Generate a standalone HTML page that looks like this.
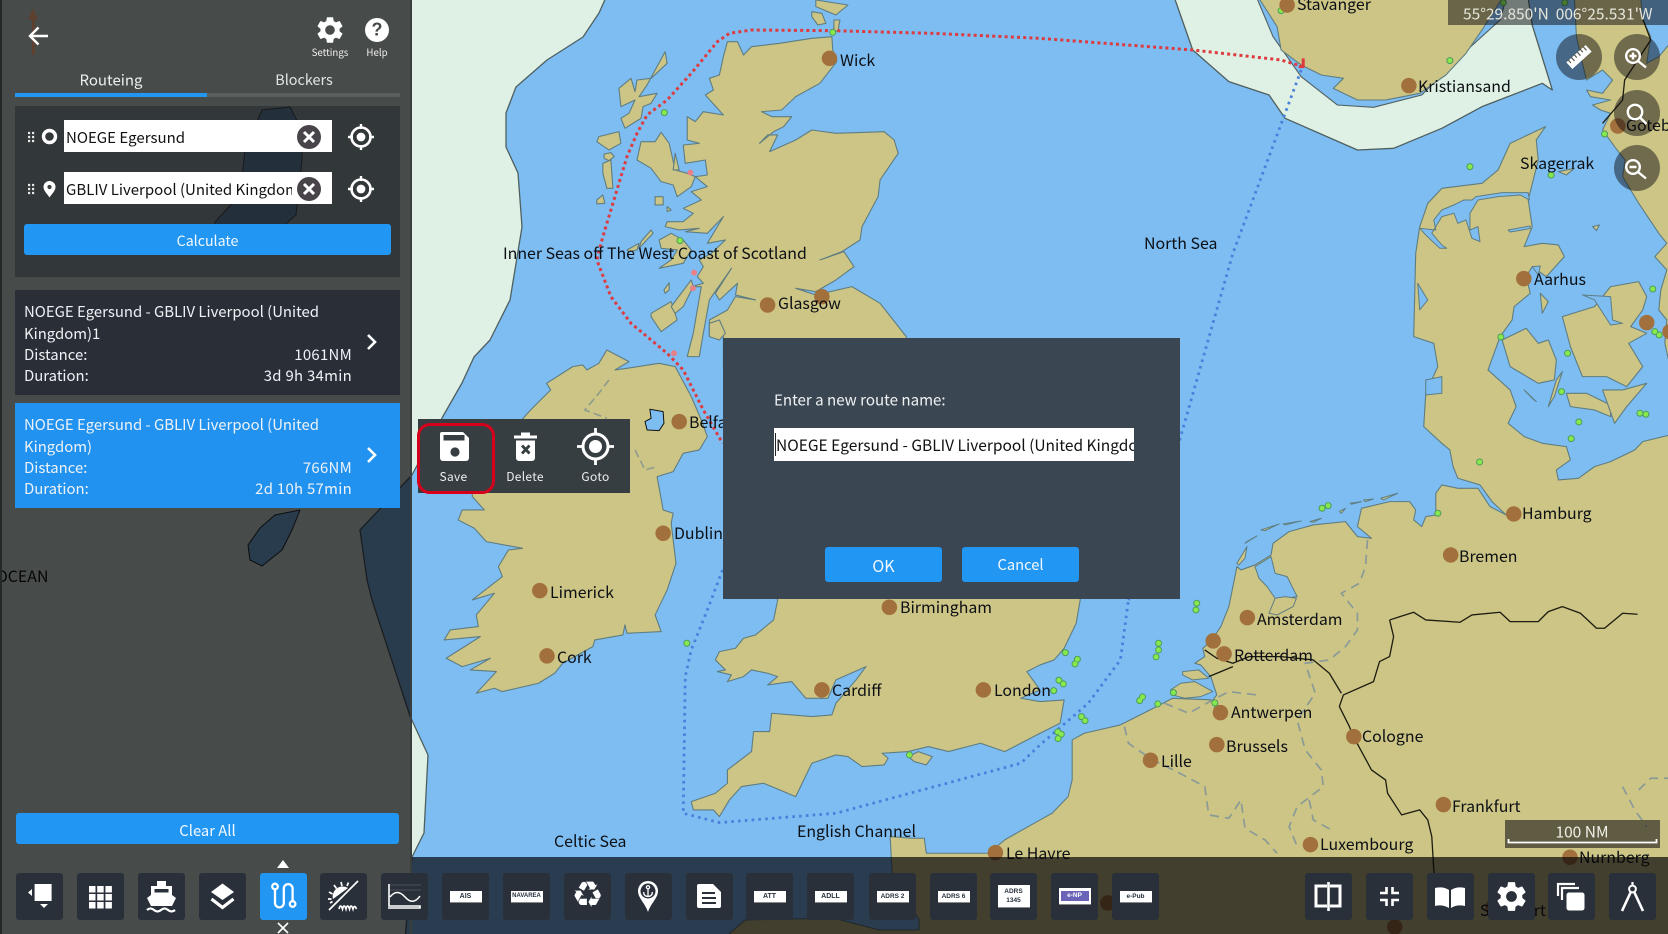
<!DOCTYPE html>
<html><head><meta charset="utf-8"><title>Routeing</title>
<style>
html,body{margin:0;padding:0;width:1668px;height:934px;overflow:hidden;background:#7dbdf2}
body{position:relative;font-family:"Noto Sans CJK JP","Liberation Sans",sans-serif;font-size:15px}
.abs,.l,.t,.btn,.tb{position:absolute}
#map{position:absolute;left:0;top:0}
#map *{vector-effect:non-scaling-stroke;stroke-linejoin:round}
.l{color:#0c0f14;font-size:15.9px;line-height:1;white-space:nowrap;margin-top:1px;transform:translateY(calc(-50% - 1px))}
.t{white-space:nowrap;line-height:1;transform:translateY(-50%)}
.c{transform:translate(-50%,-50%)}
.btn{background:#2196f3;color:#f2f8ff;border-radius:3px;text-align:center;font-size:15px}
.tb{top:873px;width:47px;height:47px;background:#2a303a;border-radius:3px}
.tb svg{position:absolute;left:0;top:0}
.tag{position:absolute;left:7.5px;top:18px;width:32px;height:11px;background:#fff;color:#27303c;font:bold 7px/11px "Liberation Sans",sans-serif;text-align:center;box-shadow:0 1px 0 #888}
.rd{position:absolute;width:46px;height:46px;border-radius:50%;background:rgba(8,6,12,.47)}
.inp{position:absolute;left:64px;width:268px;height:32px;background:#fff;color:#111;line-height:35px;font-size:15px;overflow:hidden}
.inp span{position:absolute;left:2px;top:0;width:226px;overflow:hidden;white-space:nowrap}
.card{position:absolute;left:15px;width:385px;height:105px;color:#eef2f5}
.card div{position:absolute;white-space:nowrap;line-height:21px;font-size:14.9px}
</style></head><body>

<svg id="map" width="1668" height="934" viewBox="0 0 1668 934">
<defs>
<symbol id="gear" viewBox="0 0 24 24"><path fill="#fff" d="M19.14 12.94c.04-.3.06-.61.06-.94 0-.32-.02-.64-.07-.94l2.03-1.58c.18-.14.23-.41.12-.61l-1.92-3.32c-.12-.22-.37-.29-.59-.22l-2.39.96c-.5-.38-1.03-.7-1.62-.94l-.36-2.54c-.04-.24-.24-.41-.48-.41h-3.84c-.24 0-.43.17-.47.41l-.36 2.54c-.59.24-1.13.57-1.62.94l-2.39-.96c-.22-.08-.47 0-.59.22L2.74 8.87c-.12.21-.08.47.12.61l2.03 1.58c-.05.3-.09.63-.09.94s.02.64.07.94l-2.03 1.58c-.18.14-.23.41-.12.61l1.92 3.32c.12.22.37.29.59.22l2.39-.96c.5.38 1.03.7 1.62.94l.36 2.54c.05.24.24.41.48.41h3.84c.24 0 .44-.17.47-.41l.36-2.54c.59-.24 1.13-.56 1.62-.94l2.39.96c.22.08.47 0 .59-.22l1.92-3.32c.12-.22.07-.47-.12-.61l-2.01-1.58zM12 15.6c-1.98 0-3.6-1.62-3.6-3.6s1.62-3.6 3.6-3.6 3.6 1.62 3.6 3.6-1.62 3.6-3.6 3.6z"/></symbol>
</defs>
<rect width="1668" height="934" fill="#7dbdf2"/>
<!-- territorial light zone west -->
<polygon fill="#dff1e4" stroke="#4f5f60" stroke-width="1.3" points="-5,-5 607,-5 599,13 583,37 547,60 516,87 506,113 506,147 518,173 522,227 510,300 490,340 474,357 462,383 442,418 412,475 360,530 367,580 372,600 410,716 428,755 424,833 412,857 405,940 -5,940"/>
<!-- lakes under panel -->
<polygon fill="#7dbdf2" stroke="#333" stroke-width="1" points="262,110 290,107 302,130 302,160 296,215 275,233 215,232 215,222 240,195 245,150"/>
<polygon fill="#7dbdf2" stroke="#222" stroke-width="1" points="300,510 292,530 282,550 262,566 250,560 248,545 260,528 275,515"/>
<g transform="translate(410,0) scale(.4018,.3333)">
 <g fill="#cdc585" stroke="#5f7d80" stroke-width="1.1">
  <!-- Scotland -->
  <polygon points="780,1100 780,1010 745,1010 745,960 790,930 810,890 860,900 810,885 815,850 770,900 760,880 800,805 745,900 730,1000 720,1070 690,1070 705,1000 725,860 700,860 730,850 715,830 730,800 720,780 750,760 785,720 740,730 780,650 740,700 685,695 720,685 670,690 635,680 640,665 680,665 705,640 680,625 725,600 700,575 740,560 710,530 740,525 735,480 685,490 680,435 720,430 690,420 690,350 710,365 730,335 780,345 735,285 755,270 745,235 770,225 780,170 790,125 815,125 830,165 850,140 920,130 1000,115 1050,110 1052,150 1062,185 1020,250 960,290 925,330 875,335 900,350 950,350 930,380 905,395 870,430 890,405 915,405 895,455 960,420 1000,390 1060,400 1180,395 1205,420 1215,460 1170,540 1165,590 1125,680 1120,720 1075,755 1020,780 1080,755 1105,800 1060,840 1010,875 960,865 1010,885 1100,860 1170,910 1235,1010 1235,1100"/>
  <!-- Ireland -->
  <polygon points="280,1257 300,1230 350,1170 340,1150 405,1100 430,1095 440,1110 470,1090 490,1050 545,1085 510,1110 540,1105 620,1090 660,1100 700,1190 725,1260 740,1310 720,1350 680,1360 655,1415 615,1430 630,1530 655,1540 650,1570 662,1690 640,1770 610,1845 625,1895 540,1900 535,1875 530,1905 460,1920 455,1940 380,1990 360,2020 320,2050 230,2075 210,2065 165,2080 215,2015 150,2010 200,1975 130,2000 90,1975 175,1910 85,1920 100,1890 170,1880 165,1845 210,1780 155,1800 230,1730 220,1700 245,1650 280,1645 190,1625 160,1585 120,1560 130,1530 185,1530 155,1490 155,1470"/>
  <!-- Hebrides -->
  <polygon points="635,155 640,190 600,235 565,240 560,275 550,235 520,265 525,320 560,300 545,340 525,355 535,385 575,355 580,320 600,310 615,280 570,290 590,255"/>
  <polygon points="470,410 520,395 525,430 495,450 465,425"/>
  <polygon points="483,462 500,458 508,470 495,482 483,475"/>
  <polygon points="480,490 500,480 505,565 490,565 480,520"/>
  <polygon points="465,600 480,585 485,610 465,612"/>
  <polygon points="625,397 645,430 660,510 690,520 710,530 700,560 665,590 655,555 625,545 600,505 565,480 575,425 610,425"/>
  <polygon points="660,460 670,510 655,510"/>
  <polygon points="610,590 630,590 630,615 610,615"/>
  <polygon points="640,620 650,630 640,635"/>
  <polygon points="575,725 600,690 605,700 570,745"/>
  <polygon points="540,750 570,730 565,750 545,755"/>
  <polygon points="620,720 650,700 680,720 700,750 680,790 620,805 650,780 665,750 625,745"/>
  <polygon points="600,940 650,905 665,960 625,995 600,950"/>
  <polygon points="650,920 700,840 705,860 680,920 660,940"/>
  <polygon points="745,970 770,960 785,1000 770,1020 745,1010"/>
  <polygon points="632,870 645,848 645,870 635,880"/>
  <polygon points="1010,0 1090,15 1060,45 1010,20"/>
  <polygon points="1000,35 1025,40 1035,70 1015,75 1000,50"/>
  <polygon points="1055,60 1070,60 1065,95 1055,90"/>
 </g>
 <polygon fill="#7dbdf2" stroke="#111" stroke-width="1" points="597,1228 630,1235 632,1270 620,1292 590,1290 585,1265 600,1255"/>
 <path fill="none" stroke="#8c9a8c" stroke-width="1.6" stroke-dasharray="8 4" d="M495,1140 L470,1180 L435,1230 L490,1255"/>

 <g transform="translate(0,1350)">
  <!-- England and Wales -->
  <polygon fill="#cdc585" stroke="#5f7d80" stroke-width="1.1" points="900,400 915,450 905,510 860,555 830,565 810,595 770,605 760,630 785,660 765,665 800,675 790,695 830,680 850,660 890,670 915,680 890,705 950,695 985,745 1040,745 1060,690 1135,650 1110,690 1060,760 1050,795 1000,800 900,790 895,845 855,845 850,905 790,960 790,1000 760,1030 700,1055 705,1080 755,1080 770,1100 795,1050 825,1010 880,1000 960,1040 1000,940 1060,915 1090,920 1125,950 1180,945 1190,925 1175,910 1240,905 1290,890 1340,905 1420,880 1480,905 1568,850 1618,820 1628,750 1568,755 1520,745 1568,720 1535,665 1568,645 1603,630 1628,595 1658,520 1668,450 1668,400"/>
  <polygon fill="#cdc585" stroke="#5f7d80" stroke-width="1.1" points="1240,920 1265,905 1300,920 1285,945 1255,935"/>
  <path fill="none" stroke="#8c9a8c" stroke-width="1.6" stroke-dasharray="8 4" d="M560,0 L585,60 L615,50"/>
 </g>

 <!-- Norway etc: zoom7 system -->
 <g transform="translate(1568,0)">
  <polygon fill="#dff1e4" stroke="#4f5f60" stroke-width="1.3" points="335,-5 380,150 470,245 570,285 610,355 790,450 880,445 1000,385 1100,320 1250,250 1275,270 1225,75 1215,-5"/>
  <polygon fill="#7dbdf2" stroke="#4f5f60" stroke-width="1.1" points="540,-5 580,110 650,230 740,315 830,322 950,285 1040,175 1145,60 1160,-5"/>
  <g fill="#cdc585" stroke="#5f7d80" stroke-width="1.1">
   <polygon points="545,-5 590,80 600,150 650,195 700,225 755,235 730,265 790,300 860,300 945,280 1010,225 1060,160 1100,90 1150,-5"/>
   <!-- Sweden -->
   <polygon points="1330,-5 1495,-5 1500,60 1520,110 1510,190 1540,170 1568,130 1640,130 1640,1110 1568,1100 1555,1030 1560,960 1540,930 1545,870 1560,810 1530,770 1560,730 1540,700 1490,610 1450,530 1456,480 1430,440 1400,390 1420,340 1395,330 1375,315 1420,300 1370,290 1360,270 1400,280 1425,240 1400,210 1360,240 1350,190 1335,110"/>
   <!-- Continent -->
   <polygon points="1258,380 1235,420 1240,480 1215,600 1225,680 1205,740 1250,730 1290,735 1305,770 1260,830 1225,800 1210,830 1220,880 1180,920 1175,960 1145,1010 1130,1060 1115,1110 1170,1170 1185,1220 1165,1270 1205,1310 1250,1330 1310,1340 1320,1380 1285,1410 1290,1440 1340,1435 1380,1400 1420,1385 1480,1350 1500,1325 1568,1305 1700,1300 1700,2830 -800,2830 -734,2760 -513,2755 -400,2790 -301,2790 -301,2760 -368,2620 -373,2510 -318,2515 -288,2515 -283,2560 -128,2560 -88,2520 0,2460 30,2440 70,2390 80,2340 80,2220 110,2200 200,2175 290,2120 330,2095 430,2100 440,2085 425,2030 400,1995 385,1990 410,1970 405,1945 425,1925 450,1880 470,1820 490,1700 500,1710 535,1695 575,1665 580,1630 620,1595 680,1575 760,1565 790,1610 825,1615 790,1580 800,1525 870,1505 920,1505 935,1530 930,1560 950,1580 960,1550 985,1545 985,1480 1000,1455 1040,1465 1090,1465 1120,1520 1160,1545 1125,1505 1095,1455 1040,1435 1028,1400 1020,1350 1000,1330 955,1280 960,1180 990,1100 980,1030 930,1010 935,760 945,680 965,610 1000,565 1100,550 1140,510 1170,430"/>
   <!-- Danish islands -->
   <polygon points="1150,1020 1210,985 1240,1030 1265,1020 1285,1080 1280,1140 1240,1150 1170,1100"/>
   <polygon points="1300,950 1380,920 1420,860 1490,845 1510,890 1500,930 1470,980 1510,1000 1465,1030 1500,1100 1460,1160 1410,1130 1350,1130 1320,1040"/>
   <polygon points="1310,1180 1360,1180 1420,1215 1420,1250 1380,1230 1320,1220"/>
   <polygon points="1400,1170 1450,1170 1510,1150 1460,1220 1430,1270"/>
   <polygon points="1300,1115 1280,1190 1265,1220 1285,1140"/>
   <polygon points="1205,1170 1235,1205 1225,1195"/>
   <polygon points="1245,880 1265,905 1250,940"/>
   <polygon points="1290,515 1330,505 1310,525"/>
   <polygon points="1375,680 1392,675 1385,692"/>
  </g>
  <g fill="#7dbdf2" stroke="#5f7d80" stroke-width="1">
   <polygon points="1075,600 1085,590 1150,578 1215,578 1218,600 1195,585 1140,590 1090,600 1070,640 1070,690 1090,680 1095,725 1075,715 1060,660 1040,670 1030,640 1000,650 985,680 975,700 1000,735 1012,745 995,745 960,705 945,685 985,690 980,660 1000,630 1035,612 1055,600"/>
   <polygon points="940,850 965,900 945,930"/>
   <polygon points="1225,800 1245,798 1240,825"/>
   <polygon points="1165,690 1220,678 1220,686 1170,696"/>
   <polygon points="1350,885 1420,890 1425,960 1450,970 1420,975 1380,900"/>
   <polygon points="960,1140 1000,1130 1000,1180 960,1185"/>
  </g>
 </g>

 <!-- zoom9 details -->
 <g transform="translate(1568,1350)">
  <polygon fill="#7dbdf2" stroke="#5f7d80" stroke-width="1" points="535,350 575,320 585,370 615,380 640,440 610,445 585,445 565,410 545,385"/>
  <polygon fill="#cdc585" stroke="#5f7d80" stroke-width="1" points="585,445 610,440 638,445 630,470 590,495 570,490"/>
  <g fill="#cdc585" stroke="#5f7d80" stroke-width="1">
   <polygon points="490,340 515,290 510,325 495,345"/>
   <polygon points="510,280 540,258 515,275"/>
   <polygon points="550,240 595,222 560,242"/>
   <polygon points="605,222 650,213 610,225"/>
   <polygon points="672,215 700,205 680,217"/>
   <polygon points="745,185 760,175 750,190"/>
   <polygon points="772,160 800,155 775,163"/>
   <polygon points="805,150 830,147 810,155"/>
   <polygon points="848,145 890,130 855,150"/>
   <polygon points="325,720 350,700 385,695 430,725 400,740 360,745 330,735"/>
   <polygon points="355,665 395,660 420,685 380,690 355,675"/>
  </g>
  <path fill="none" stroke="#8a9a96" stroke-width="1.7" stroke-dasharray="9 6" d="M815,270 L810,350 L795,400 L750,430 L790,490 L790,540 L760,590 L720,630 L660,640 L685,730 L640,810 L660,900 L700,960 L705,1010 L640,1070 L620,1130 L640,1190 M210,830 L220,880 L280,930 L340,965 L410,1010 L420,1095 L470,1105 L500,1050 L510,1135 L560,1170 L590,1210 M310,760 L370,790 L430,750 L470,725 L540,735 M670,1050 L680,1110 L725,1140 M1450,1010 L1480,1080 L1510,1130 M1490,1020 L1520,985 L1568,985"/>
  <path fill="none" stroke="#1c1c10" stroke-width="1.3" d="M870,510 L930,487 L960,510 L1045,517 L1075,495 L1145,487 L1170,515 L1240,515 L1265,485 L1300,470 L1345,490 L1385,535 L1405,535 L1450,490 L1487,493 M870,510 L880,560 L870,620 L845,635 L830,695 L755,735 L745,770 L770,830 L780,860 L825,960 L860,990 L865,1030 L900,1095 L945,1080 L965,1110 L975,1160 L980,1260 L990,1340 M410,600 L440,625 L480,640 L520,620 L600,620 L680,630 L720,670 L750,730 M420,680 L480,650"/>
 </g>
 <path fill="none" stroke="#1c1c10" stroke-width="1.3" transform="translate(1568,0)" d="M1495,40 L1520,120 L1455,240 L1450,300 L1400,370"/>

 <!-- Routes -->
 <path fill="none" stroke="#dd3b3f" stroke-width="3" stroke-dasharray="3 3.2" d="M2223,200 L2168,180 L1948,150 L1568,115 L1300,100 L1050,92 L850,90 L795,100 L765,125 L700,220 L640,300 L590,345 L565,400 L540,470 L510,590 L480,710 L465,780 L500,890 L550,970 L640,1060 L680,1110 L730,1230 L778,1330"/>
 <path fill="none" stroke="#dd3b3f" stroke-width="3" d="M2223,175 V200 H2212"/>
 <path fill="none" stroke="#4a80dc" stroke-width="2.8" stroke-dasharray="2.6 4.2" d="M2218,210 L2178,340 L2048,760 L1918,1310 L1830,1720 L1788,1800 M778,1710 L740,1830 L700,1950 L685,2030 L680,2440 L770,2468 L1060,2440 L1520,2290 L1568,2235 L1688,2110 L1768,1980 L1788,1800"/>

 <!-- Green dots -->
 <path fill="none" stroke="#4f9a5c" stroke-width="7" stroke-linecap="round" d="M633 338h.01M1052 97h.01M672 722h.01M689 1930h.01M1243 2265h.01M2168 32h.01M2588 182h.01M2638 500h.01M2840 525h.01M2973 402h.01M3093 867h.01M3098 995h.01M3109 1005h.01M2715 1011h.01M2881 1060h.01M2866 1175h.01M3061 1240h.01M3076 1243h.01M2909 1266h.01M2890 1316h.01M2721 8h.01M2874 8h.01M2662 1386h.01M2558 1540h.01M2270 1525h.01M2285 1517h.01M1958 1810h.01M1956 1830h.01M1863 1930h.01M1863 1950h.01M1857 1971h.01M1631 1958h.01M1661 1978h.01M1655 1992h.01M1615 2041h.01M1626 2052h.01M1602 2072h.01M1823 2091h.01M1816 2102h.01M1900 2078h.01M1861 2112h.01M2003 2109h.01M2009 2125h.01M2016 2132h.01M1671 2150h.01M1680 2162h.01M1612 2196h.01M1621 2203h.01M1613 2216h.01"/>
 <path fill="none" stroke="#86ea4e" stroke-width="5" stroke-linecap="round" d="M633 338h.01M1052 97h.01M672 722h.01M689 1930h.01M1243 2265h.01M2168 32h.01M2588 182h.01M2638 500h.01M2840 525h.01M2973 402h.01M3093 867h.01M3098 995h.01M3109 1005h.01M2715 1011h.01M2881 1060h.01M2866 1175h.01M3061 1240h.01M3076 1243h.01M2909 1266h.01M2890 1316h.01M2721 8h.01M2874 8h.01M2662 1386h.01M2558 1540h.01M2270 1525h.01M2285 1517h.01M1958 1810h.01M1956 1830h.01M1863 1930h.01M1863 1950h.01M1857 1971h.01M1631 1958h.01M1661 1978h.01M1655 1992h.01M1615 2041h.01M1626 2052h.01M1602 2072h.01M1823 2091h.01M1816 2102h.01M1900 2078h.01M1861 2112h.01M2003 2109h.01M2009 2125h.01M2016 2132h.01M1671 2150h.01M1680 2162h.01M1612 2196h.01M1621 2203h.01M1613 2216h.01"/>
 <!-- Pink dots -->
 <path fill="none" stroke="#e8808a" stroke-width="6" stroke-linecap="round" d="M698 518h.01M707 818h.01M704 865h.01M657 1060h.01"/>
 <!-- City dots -->
 <path fill="none" stroke="#a2703c" stroke-width="15.5" stroke-linecap="round" d="M1044 175h.01M890 915h.01M1025 890h.01M670 1265h.01M630 1600h.01M323 1772h.01M341 1968h.01M1193 1822h.01M1025 2070h.01M1427 2070h.01M1457 2558h.01M2183 15h.01M2486 257h.01M3006 378h.01M2772 836h.01M3078 968h.01M3136 995h.01M2747 1542h.01M2590 1665h.01M2084 1853h.01M1999 1923h.01M2026 1962h.01M2017 2138h.01M2008 2234h.01M1843 2281h.01M2349 2210h.01M2572 2414h.01M2241 2534h.01M2887 2572h.01M2696 2721h.01M2451 2781h.01M1737 2709h.01"/>
</g>
</svg>

<!-- Map labels -->
<div class="l" style="left:840px;top:60px">Wick</div>
<div class="l" style="left:503px;top:253px">Inner Seas off The West Coast of Scotland</div>
<div class="l" style="left:778px;top:303px">Glasgow</div>
<div class="l" style="left:689px;top:422px">Belfast</div>
<div class="l" style="left:674px;top:533px">Dublin</div>
<div class="l" style="left:550px;top:592px">Limerick</div>
<div class="l" style="left:557px;top:657px">Cork</div>
<div class="l" style="left:900px;top:607px">Birmingham</div>
<div class="l" style="left:832px;top:690px">Cardiff</div>
<div class="l" style="left:994px;top:690px">London</div>
<div class="l" style="left:797px;top:831px">English Channel</div>
<div class="l" style="left:554px;top:841px">Celtic Sea</div>
<div class="l" style="left:1006px;top:853px">Le Havre</div>
<div class="l" style="left:1297px;top:4px">Stavanger</div>
<div class="l" style="left:1418px;top:86px">Kristiansand</div>
<div class="l" style="left:1520px;top:163px">Skagerrak</div>
<div class="l" style="left:1626px;top:125px">Goteborg</div>
<div class="l" style="left:1144px;top:243px">North Sea</div>
<div class="l" style="left:1534px;top:279px">Aarhus</div>
<div class="l" style="left:1522px;top:513px">Hamburg</div>
<div class="l" style="left:1459px;top:556px">Bremen</div>
<div class="l" style="left:1257px;top:619px">Amsterdam</div>
<div class="l" style="left:1234px;top:655px">Rotterdam</div>
<div class="l" style="left:1231px;top:712px">Antwerpen</div>
<div class="l" style="left:1362px;top:736px">Cologne</div>
<div class="l" style="left:1226px;top:746px">Brussels</div>
<div class="l" style="left:1161px;top:761px">Lille</div>
<div class="l" style="left:1452px;top:806px">Frankfurt</div>
<div class="l" style="left:1320px;top:844px">Luxembourg</div>
<div class="l" style="left:1579px;top:857px">Nurnberg</div>
<div class="l" style="left:1480px;top:910px">Stuttgart</div>
<div class="l" style="left:-4px;top:576px">OCEAN</div>

<!-- Overlays -->
<div class="abs" style="left:412px;top:857px;width:1256px;height:77px;background:rgba(5,3,7,.69)"></div>
<div class="abs" style="left:0;top:0;width:412px;height:934px;background:rgba(3,2,5,.69)"></div>
<div class="abs" style="left:0;top:0;width:2px;height:934px;background:#26292a"></div>
<div class="abs" style="left:410px;top:0;width:2px;height:934px;background:#3a3e3d"></div>

<!-- Panel header -->
<svg class="abs" style="left:0;top:0" width="412" height="112" viewBox="0 0 412 112">
 <path d="M33,8 L38,20 L35,20 L35,55 L32,55 L32,20 L28,20Z" fill="#5e4030"/>
 <path d="M48,36 H30 M38.5,27.5 L30,36 L38.5,44.5" fill="none" stroke="#fff" stroke-width="2.4"/>
 <use href="#gear" x="314" y="14" width="32" height="32"/>
 <circle cx="377" cy="30" r="12" fill="#fff"/>
</svg>
<div class="t c" style="left:377px;top:30px;color:#454a48;font:bold 18px 'Liberation Sans',sans-serif">?</div>
<div class="t c" style="left:330px;top:53px;color:#f0f0f0;font-size:9.7px">Settings</div>
<div class="t c" style="left:377px;top:53px;color:#f0f0f0;font-size:9.7px">Help</div>
<div class="t c" style="left:111px;top:80px;color:#eef0f0;font-size:15px">Routeing</div>
<div class="t c" style="left:304px;top:80px;color:#e4e6e6;font-size:14.4px">Blockers</div>
<div class="abs" style="left:207px;top:93px;width:193px;height:4px;background:#5a5e5c"></div>
<div class="abs" style="left:15px;top:93px;width:192px;height:4px;background:#2196f3"></div>

<!-- Route form -->
<div class="abs" style="left:15px;top:106px;width:385px;height:171px;background:rgba(30,34,40,.5)"></div>
<div class="inp" style="top:120px"><span>NOEGE Egersund</span></div>
<div class="inp" style="top:172px"><span>GBLIV Liverpool (United Kingdom)</span></div>
<svg class="abs" style="left:0;top:100px" width="412" height="120" viewBox="0 100 412 120">
 <path d="M28,133h2.2M28,137h2.2M28,141h2.2M32,133h2.2M32,137h2.2M32,141h2.2M28,185h2.2M28,189h2.2M28,193h2.2M32,185h2.2M32,189h2.2M32,193h2.2" stroke="#e8e8e8" stroke-width="2.2"/>
 <circle cx="49.5" cy="136.5" r="6" fill="none" stroke="#fff" stroke-width="3.4"/>
 <path d="M49.5,181 a6,6 0 0 1 6,6 c0,4 -4,7 -6,10.5 c-2,-3.5 -6,-6.5 -6,-10.5 a6,6 0 0 1 6,-6z" fill="#fff"/><circle cx="49.5" cy="187" r="2.1" fill="#3a3f40"/>
 <g id="x1"><circle cx="309" cy="137" r="12" fill="#48444a"/><path d="M304,132 L314,142 M314,132 L304,142" stroke="#fff" stroke-width="3"/></g>
 <g><circle cx="309" cy="189" r="12" fill="#48444a"/><path d="M304,184 L314,194 M314,184 L304,194" stroke="#fff" stroke-width="3"/></g>
 <g fill="none" stroke="#fff"><circle cx="361" cy="137" r="9.5" stroke-width="2.6"/><path d="M361,124 V129 M361,145 V150 M348,137 H353 M369,137 H374" stroke-width="2.4"/><circle cx="361" cy="137" r="4.4" fill="#fff" stroke="none"/></g>
 <g fill="none" stroke="#fff"><circle cx="361" cy="189" r="9.5" stroke-width="2.6"/><path d="M361,176 V181 M361,197 V202 M348,189 H353 M369,189 H374" stroke-width="2.4"/><circle cx="361" cy="189" r="4.4" fill="#fff" stroke="none"/></g>
</svg>
<div class="btn" style="left:24px;top:224px;width:367px;height:31px;line-height:35px;font-size:14.2px">Calculate</div>

<!-- Route cards -->
<div class="card" style="top:290px;background:#2a2f37">
 <div style="left:9px;top:11px">NOEGE Egersund - GBLIV Liverpool (United</div>
 <div style="left:9px;top:33px">Kingdom)1</div>
 <div style="left:9px;top:54px">Distance:</div>
 <div style="left:9px;top:75px">Duration:</div>
 <div style="right:48px;top:54px;letter-spacing:.3px">1061NM</div>
 <div style="right:48px;top:75px;letter-spacing:.3px">3d 9h 34min</div>
 <svg style="position:absolute;left:349px;top:43px" width="16" height="18"><path d="M4,2 L11,9 L4,16" fill="none" stroke="#fff" stroke-width="2.6"/></svg>
</div>
<div class="card" style="top:403px;background:#2192f0">
 <div style="left:9px;top:11px">NOEGE Egersund - GBLIV Liverpool (United</div>
 <div style="left:9px;top:33px">Kingdom)</div>
 <div style="left:9px;top:54px">Distance:</div>
 <div style="left:9px;top:75px">Duration:</div>
 <div style="right:48px;top:54px;letter-spacing:.3px">766NM</div>
 <div style="right:48px;top:75px;letter-spacing:.3px">2d 10h 57min</div>
 <svg style="position:absolute;left:349px;top:43px" width="16" height="18"><path d="M4,2 L11,9 L4,16" fill="none" stroke="#fff" stroke-width="2.6"/></svg>
</div>
<div class="btn" style="left:16px;top:813px;width:383px;height:31px;line-height:35px;font-size:14.8px">Clear All</div>

<!-- Toolbar -->
<svg class="abs" style="left:275px;top:859px" width="16" height="10"><path d="M8,1 L14,9 H2Z" fill="#fff"/></svg>
<svg class="abs" style="left:276px;top:922px" width="14" height="12"><path d="M2,1 L12,11 M12,1 L2,11" stroke="#fff" stroke-width="1.6"/></svg>

<div class="tb" style="left:16px"><svg width="47" height="47"><rect x="18.6" y="11" width="17" height="17" fill="#fff"/><path d="M16,16 V23 L12,19.5Z M24,31 H32 L28,35Z" fill="#fff"/></svg></div>
<div class="tb" style="left:77px"><svg width="47" height="47"><path fill="#fff" d="M12 13h6.5v6.5H12zM20.2 13h6.5v6.5h-6.5zM28.4 13h6.5v6.5h-6.5zM12 21h6.5v6.5H12zM20.2 21h6.5v6.5h-6.5zM28.4 21h6.5v6.5h-6.5zM12 29h6.5v6.5H12zM20.2 29h6.5v6.5h-6.5zM28.4 29h6.5v6.5h-6.5z"/></svg></div>
<div class="tb" style="left:138px"><svg width="47" height="47"><path fill="#fff" d="M19,8 H28 V13 H34 V22 L38,25 L34,33 H13 L9,25 L13,22 V13 H19Z"/><rect x="16.5" y="16" width="14" height="3.5" fill="#2a303a"/><path d="M9,37 q3.5,-3 7,0 t7,0 t7,0 t7,0" fill="none" stroke="#fff" stroke-width="2.2"/></svg></div>
<div class="tb" style="left:198.6px"><svg width="47" height="47"><path fill="#fff" d="M23.5,10.5 L35,19 L23.5,27 L12,19Z"/><path d="M12.5,26 L23.5,34.5 L34.5,26" fill="none" stroke="#fff" stroke-width="3.2"/></svg></div>
<div class="tb" style="left:259.5px;background:#2196f3"><svg width="47" height="47"><g fill="none" stroke="#fff" stroke-width="2.3"><circle cx="15" cy="13.5" r="2.8"/><path d="M15,16.5 V30 a4.4,4.4 0 0 0 8.8,0 V15.5 a4.4,4.4 0 0 1 8.8,0 V28"/><circle cx="32.6" cy="31" r="2.8"/></g></svg></div>
<div class="tb" style="left:320px"><svg width="47" height="47"><path fill="#fff" d="M13,26 a10,10 0 0 1 15,-11Z"/><g stroke="#fff" stroke-width="1.7" fill="none"><path d="M38,8 L9,37 M9,19 L12.5,21 M8,26 H11.5 M14,12 L16.5,15.5 M21,9 L22,13 M28.5,9.5 L27,13 M10,30 L12.5,28.5"/><path d="M19,36 q1.5,-6 3.5,0 q1.5,-6 3.5,0 q1.5,-6 3.5,0 q1.5,-6 3.5,0 q1.5,-5 3.5,0"/></g></svg></div>
<div class="tb" style="left:381px"><svg width="47" height="47"><path d="M8,12 H40 M8,17 H40" stroke="#4b5058" stroke-width="1"/><path d="M8,11 V33 H39 V35 H7" fill="none" stroke="#fff" stroke-width="1.6"/><path d="M9,24 q7,-9 15,0 t15,-1" fill="none" stroke="#fff" stroke-width="1.5"/></svg></div>
<div class="tb" style="left:442px"><div class="tag">AIS</div></div>
<div class="tb" style="left:503px"><div class="tag" style="font-size:6px">NAVAREA</div></div>
<div class="tb" style="left:564px"><div class="abs c" style="left:23.5px;top:23px;color:#fff;font:36px/1 'DejaVu Sans',sans-serif;white-space:nowrap">♻</div></div>
<div class="tb" style="left:625px"><svg width="47" height="47"><path fill="#fff" d="M23,8 a10,10 0 0 1 10,10 c0,7 -7,12 -10,21 c-3,-9 -10,-14 -10,-21 a10,10 0 0 1 10,-10z"/><circle cx="23" cy="18" r="7.5" fill="#2a303a"/><g fill="none" stroke="#fff" stroke-width="1.3"><circle cx="23" cy="14.2" r="1.6"/><path d="M23,16 V23.5 M18.5,19 q.5,4.5 4.5,4.5 q4,0 4.5,-4.5"/></g></svg></div>
<div class="tb" style="left:686px"><svg width="47" height="47"><path fill="#fff" d="M13,11 H27 L35,19 V33 a2,2 0 0 1 -2,2 H13 a2,2 0 0 1 -2,-2 V13 a2,2 0 0 1 2,-2z"/><path d="M16,20 H29 M16,25 H30 M16,30 H30" stroke="#2a303a" stroke-width="2"/></svg></div>
<div class="tb" style="left:746px"><div class="tag">ATT</div></div>
<div class="tb" style="left:807px"><div class="tag">ADLL</div></div>
<div class="tb" style="left:869px"><div class="tag" style="font-size:6.5px">ADRS 2</div></div>
<div class="tb" style="left:930px"><div class="tag" style="font-size:6.5px">ADRS 6</div></div>
<div class="tb" style="left:990px"><div class="tag" style="top:12px;height:22px;font-size:6.5px;line-height:9px;padding-top:2px;box-sizing:border-box">ADRS<br>1345</div></div>
<div class="tb" style="left:1051px"><div class="tag" style="top:15px;height:16px;box-sizing:border-box;padding:3px 2px"><div style="background:#6a63b8;color:#fff;height:10px;font-size:6.5px;line-height:10px">e-NP</div></div></div>
<div class="tb" style="left:1112px"><div class="tag" style="font-size:6.5px;font-weight:bold">e-Pub</div></div>

<div class="tb" style="left:1305px"><svg width="47" height="47"><path d="M22,13 H11 V33 H22 M25,13 H35 V33 H25" fill="none" stroke="#fff" stroke-width="3"/><path d="M23.5,9 V38" stroke="#fff" stroke-width="2.6"/></svg></div>
<div class="tb" style="left:1366px"><svg width="47" height="47"><path d="M14,20 H20.5 V14 M26.5,14 V20 H33 M14,27 H20.5 V33 M26.5,33 V27 H33" fill="none" stroke="#fff" stroke-width="2.6"/></svg></div>
<div class="tb" style="left:1427px"><svg width="47" height="47"><path fill="#fff" d="M8,15 q8,-2 14,2 V35 q-7,-4 -14,-2z M24,17 q6,-4 14,-2 V33 q-8,-2 -14,2z"/></svg></div>
<div class="tb" style="left:1488px"><svg width="47" height="47"><use href="#gear" x="5.5" y="5.5" width="36" height="36"/></svg></div>
<div class="tb" style="left:1548px"><svg width="47" height="47"><path d="M10,23 V11 H27 M14,27 V15 H31" fill="none" stroke="#fff" stroke-width="2.2"/><rect x="18.5" y="19.5" width="18" height="18" rx="2.5" fill="#fff"/></svg></div>
<div class="tb" style="left:1609px"><svg width="47" height="47"><g fill="none" stroke="#fff"><circle cx="23.5" cy="16" r="3.4" stroke-width="2"/><path d="M23.5,9 V12.5" stroke-width="2.2"/><path d="M21.8,19 L13,38 M25.2,19 L34,38" stroke-width="2.6"/></g></svg></div>

<!-- Top right -->
<div class="abs" style="left:1448px;top:0;width:220px;height:25px;background:rgba(8,6,12,.5)"></div>
<div class="t" style="left:1463px;top:14px;color:#e6e6dc;font-size:15.5px">55°29.850'N&nbsp; 006°25.531'W</div>
<div class="rd" style="left:1556px;top:34px"></div>
<div class="rd" style="left:1614px;top:34px"></div>
<div class="rd" style="left:1614px;top:90px"></div>
<div class="rd" style="left:1614px;top:145px"></div>
<svg class="abs" style="left:1556px;top:30px" width="112" height="170" viewBox="1556 30 112 170">
 <g transform="translate(1579,57) rotate(-42)"><rect x="-13" y="-4.5" width="26" height="9" fill="#fff"/><path d="M-10,-5 V-1 M-6,-5 V0 M-2,-5 V-1 M2,-5 V0 M6,-5 V-1 M10,-5 V0" stroke="#5b5a4a" stroke-width="1.2"/></g>
 <g fill="none" stroke="#fff" stroke-width="2.4">
  <circle cx="1633" cy="56" r="6.8"/><path d="M1638,61 L1646,67.5 M1629.5,56 H1636.5 M1633,52.5 V59.5" />
  <circle cx="1635" cy="112" r="7.2"/><path d="M1640,117.5 L1646.5,124"/>
  <circle cx="1633" cy="167" r="6.8"/><path d="M1638,172 L1646,178.5 M1629.5,167 H1636.5"/>
 </g>
</svg>

<!-- Scale bar -->
<div class="abs" style="left:1505px;top:820px;width:155px;height:28px;background:rgba(8,6,12,.55)"></div>
<div class="t c" style="left:1582px;top:832px;color:#f0f0e8;font-size:15.5px">100 NM</div>
<svg class="abs" style="left:1505px;top:835px" width="155" height="12"><path d="M3.5,4 V7.5 H151.5 V4" fill="none" stroke="#fff" stroke-width="1.8"/></svg>

<!-- Context popup -->
<div class="abs" style="left:418px;top:419px;width:212px;height:74px;background:#373e42"></div>
<div class="abs" style="left:417px;top:423px;width:78px;height:71px;box-sizing:border-box;border:3.5px solid #d6001c;border-radius:13px"></div>
<svg class="abs" style="left:418px;top:419px" width="212" height="50" viewBox="418 419 212 50">
 <path fill="#fff" d="M442,432 H463 L469,438 V458 a3,3 0 0 1 -3,3 H443 a3,3 0 0 1 -3,-3 V434 a2,2 0 0 1 2,-2z"/>
 <rect x="443.5" y="435" width="21" height="5.5" fill="#373e42"/><circle cx="455" cy="452" r="4.6" fill="#373e42"/>
 <path fill="#fff" d="M514,435.5 H521 V432.5 H530 V435.5 H537 V438.5 H514Z M516,440.5 H535 V458 a3,3 0 0 1 -3,3 H519 a3,3 0 0 1 -3,-3Z"/>
 <path d="M522,445.5 L529.5,453.5 M529.5,445.5 L522,453.5" stroke="#373e42" stroke-width="2.8"/>
 <g fill="none" stroke="#fff"><circle cx="595.5" cy="446.5" r="12.5" stroke-width="3"/><path d="M595.5,428 V434 M595.5,459 V465 M577,446.5 H583 M608,446.5 H614" stroke-width="2.8"/></g><circle cx="595.5" cy="446.5" r="6.5" fill="#fff"/>
</svg>
<div class="t c" style="left:453.5px;top:477px;color:#eef0f0;font-size:12px;letter-spacing:.3px">Save</div>
<div class="t c" style="left:525px;top:477px;color:#eef0f0;font-size:12px;letter-spacing:.3px">Delete</div>
<div class="t c" style="left:595.5px;top:477px;color:#eef0f0;font-size:12px;letter-spacing:.3px">Goto</div>

<!-- Dialog -->
<div class="abs" style="left:723px;top:338px;width:457px;height:261px;background:#3a4651"></div>
<div class="t" style="left:774px;top:400px;color:#f0f2f4;font-size:15.1px">Enter a new route name:</div>
<div class="abs" style="left:774px;top:428px;width:360px;height:33px;background:#fff;overflow:hidden;color:#111;line-height:35px;font-size:15.5px;white-space:nowrap"><span style="position:absolute;left:2px;top:0">NOEGE Egersund - GBLIV Liverpool (United Kingdom)</span><span style="position:absolute;left:1px;top:5px;width:1px;height:23px;background:#222"></span></div>
<div class="btn" style="left:825px;top:547px;width:117px;height:35px;line-height:36px;font-size:16px">OK</div>
<div class="btn" style="left:962px;top:547px;width:117px;height:35px;line-height:36px;font-size:14.7px">Cancel</div>
</body></html>
